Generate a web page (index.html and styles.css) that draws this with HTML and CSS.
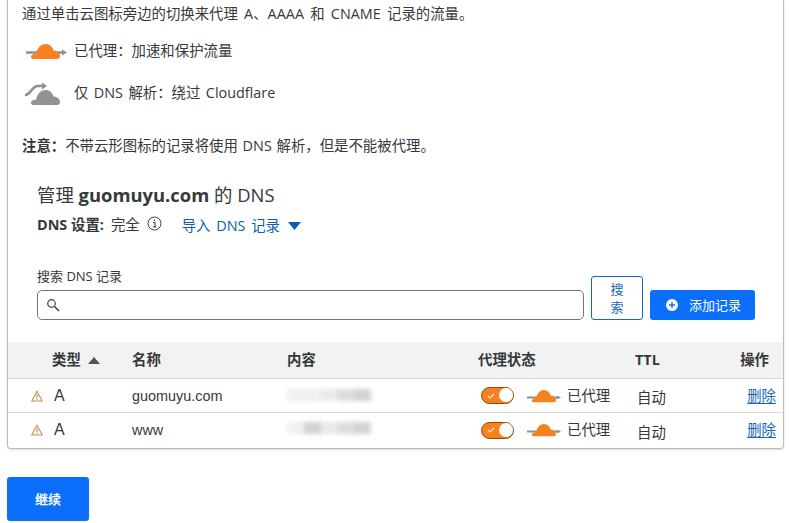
FILE: index.html
```html
<!DOCTYPE html>
<html lang="zh">
<head>
<meta charset="utf-8">
<title>DNS</title>
<link rel="stylesheet" href="styles.css">
</head>
<body>
<svg class="defs" width="0" height="0" aria-hidden="true">
  <symbol id="cloud" viewBox="0 0 30 15">
    <path d="M4 15C1 15 0 12.500 2 11c1-1 3-1.500 4-1C7 4 11 0 15.500 0c4 0 7 2.500 8 6.500 3.500 0 6.500 2.500 6.500 5.500 0 2-1 3-3 3z"/>
  </symbol>
</svg>
<main class="panel">
  <p class="intro">通过单击云图标旁边的切换来代理 A、AAAA 和 CNAME 记录的流量。</p>
  <div class="legend legend-on">
    <svg class="legend-icon" width="42" height="20" viewBox="0 0 42 20"><path d="M1 11.500h12M32 11.500h6" stroke="#8d8f93" stroke-width="2.600" fill="none"/><path d="M37 8.500l5 3-5 3z" fill="#8d8f93"/><use href="#cloud" x="5" y="3" width="30" height="15" fill="#f6821f"/></svg>
    <span>已代理：加速和保护流量</span>
  </div>
  <div class="legend legend-off">
    <svg class="legend-icon" width="38" height="26" viewBox="0 0 38 26"><path d="M1 15c5 0 7-8 12-9h7" stroke="#8d8f93" stroke-width="2.600" fill="none"/><path d="M18 2.500l5 3.500-5 3.500z" fill="#8d8f93"/><use href="#cloud" x="6" y="10" width="30" height="15" fill="#8f9296"/></svg>
    <span>仅 DNS 解析：绕过 Cloudflare</span>
  </div>
  <p class="note"><strong>注意：</strong>不带云形图标的记录将使用 DNS 解析，但是不能被代理。</p>

  <section class="manage">
    <h1>管理 <strong>guomuyu.com</strong> 的 DNS</h1>
    <div class="settings">
      <strong>DNS 设置:</strong>
      <span class="mode">完全</span>
      <svg class="info" width="15" height="15" viewBox="0 0 15 15"><circle cx="7.500" cy="7.500" r="6.500" fill="none" stroke="#444" stroke-width="1"/><path d="M6 6.500h2v4.500M5.800 11h3.600M7.500 3.500v1.500" fill="none" stroke="#444" stroke-width="1.100"/></svg>
      <a class="import" href="#">导入 DNS 记录<svg width="13" height="8" viewBox="0 0 13 8"><path d="M0 0h13L6.500 8z" fill="#0a5fb4"/></svg></a>
    </div>
    <div class="search-row">
      <div class="search-field">
        <label for="q">搜索 DNS 记录</label>
        <div class="input">
          <svg width="14" height="14" viewBox="0 0 14 14"><circle cx="5.500" cy="5.500" r="3.800" fill="none" stroke="#444" stroke-width="1.200"/><path d="M8.500 8.500L13 13" stroke="#444" stroke-width="1.600"/></svg>
          <input id="q" type="text">
        </div>
      </div>
      <button class="btn-search" type="button">搜索</button>
      <button class="btn-add" type="button"><svg width="12" height="12" viewBox="0 0 12 12"><circle cx="6" cy="6" r="6" fill="#fff"/><path d="M3 6h6M6 3v6" stroke="#0b6ffb" stroke-width="1.400"/></svg>添加记录</button>
    </div>
  </section>

  <div class="table">
    <div class="row head">
      <div class="c-type">类型<svg width="12" height="7" viewBox="0 0 12 7"><path d="M0 7h12L6 0z" fill="#555"/></svg></div>
      <div class="c-name">名称</div>
      <div class="c-content">内容</div>
      <div class="c-proxy">代理状态</div>
      <div class="c-ttl">TTL</div>
      <div class="c-act">操作</div>
    </div>
    <div class="row">
      <div class="c-type"><svg class="warn" width="12" height="12" viewBox="0 0 12 12"><path d="M6 1.200L11.200 11H.8z" fill="none" stroke="#c9924f" stroke-width="1.100"/><path d="M6 4.500v3.500M6 8.800v1" stroke="#9a7a55" stroke-width="1"/></svg><span>A</span></div>
      <div class="c-name">guomuyu.com</div>
      <div class="c-content"><div class="blur"><i class="l"></i><i class="l"></i><i class="m"></i><i></i><i class="d"></i></div></div>
      <div class="c-proxy"><span class="toggle"><svg width="8" height="6" viewBox="0 0 8 6"><path d="M1 3l2 2 4-4" fill="none" stroke="#fde3c8" stroke-width="1.200"/></svg></span><svg class="cloud" width="34" height="14" viewBox="0 0 34 14"><path d="M0 8.500h10M27 8.500h3" stroke="#8d8f93" stroke-width="1.800"/><path d="M30 6.500l4 2-4 2z" fill="#8d8f93"/><use href="#cloud" x="4" y="1" width="25" height="12.500" fill="#f6821f"/></svg>已代理</div>
      <div class="c-ttl ttl">自动</div>
      <div class="c-act"><a href="#">删除</a></div>
    </div>
    <div class="row">
      <div class="c-type"><svg class="warn" width="12" height="12" viewBox="0 0 12 12"><path d="M6 1.200L11.200 11H.8z" fill="none" stroke="#c9924f" stroke-width="1.100"/><path d="M6 4.500v3.500M6 8.800v1" stroke="#9a7a55" stroke-width="1"/></svg><span>A</span></div>
      <div class="c-name">www</div>
      <div class="c-content"><div class="blur up"><i class="l"></i><i class="d"></i><i class="m"></i><i></i><i class="d"></i></div></div>
      <div class="c-proxy"><span class="toggle"><svg width="8" height="6" viewBox="0 0 8 6"><path d="M1 3l2 2 4-4" fill="none" stroke="#fde3c8" stroke-width="1.200"/></svg></span><svg class="cloud" width="34" height="14" viewBox="0 0 34 14"><path d="M0 8.500h10M27 8.500h3" stroke="#8d8f93" stroke-width="1.800"/><path d="M30 6.500l4 2-4 2z" fill="#8d8f93"/><use href="#cloud" x="4" y="1" width="25" height="12.500" fill="#f6821f"/></svg>已代理</div>
      <div class="c-ttl ttl">自动</div>
      <div class="c-act"><a href="#">删除</a></div>
    </div>
  </div>
</main>
<button class="btn-continue" type="button">继续</button>
</body>
</html>
```
FILE: styles.css
```css
* { box-sizing: border-box; }
html, body { margin: 0; padding: 0; }
body {
  background: #fff;
  color: #36393a;
  font: 14.4px/18px "Open Sans", "Noto Sans CJK SC", sans-serif;
  padding: 0 5px 0 7px;
  height: 523px;
  overflow: hidden;
}
.defs { position: absolute; }
.panel {
  width: 777px;
  height: 449px;
  border: 1px solid #bcbcbc;
  border-top: 0;
  border-radius: 0 0 4px 4px;
  box-shadow: 0 1px 2px rgba(0,0,0,.15);
  padding-top: 5px;
}
.intro { margin: 0 0 0 14px; word-spacing: 2.5px; }
.legend { display: flex; align-items: center; margin-left: 14px; word-spacing: 1.7px; }
.legend-icon { flex: none; }
.legend-on { margin-top: 17px; height: 22px; padding-left: 3px; }
.legend-on .legend-icon { margin-right: 7px; }
.legend-off { margin-top: 20px; height: 22px; padding-left: 2px; }
.legend-off .legend-icon { margin-right: 12px; }
.note { margin: 33px 0 0 14px; word-spacing: 1px; }
.note strong { font-weight: 700; }
.manage { padding: 0 28px 0 29px; }
h1 {
  font-size: 18.4px;
  line-height: 24px;
  font-weight: 400;
  margin: 28px 0 0;
}
h1 strong { font-weight: 700; }
.settings { display: flex; align-items: center; margin-top: 6px; height: 24px; }
.settings strong { font-weight: 700; margin-right: 7px; }
.info { margin-left: 7px; margin-top: -4px; }
.import { color: #0a5fb4; text-decoration: none; margin-left: 20px; font-size: 14.4px; word-spacing: 2px; display: flex; align-items: center; gap: 8px; margin-top: 2px; }
.search-row { display: flex; align-items: flex-end; margin-top: 31px; }
.search-field { width: 547px; }
.search-field label { display: block; font-size: 13px; line-height: 16px; margin-bottom: 6px; }
.input {
  display: flex;
  align-items: center;
  height: 30px;
  border: 1px solid #757575;
  border-radius: 5px;
  padding-left: 8px;
}
.input input { flex: 1; border: 0; outline: 0; background: none; min-width: 0; }
.btn-search {
  width: 52px;
  height: 44px;
  margin-left: 7px;
  background: #fff;
  border: 1px solid #1769b5;
  border-radius: 3px;
  color: #1769b5;
  font: 13px/18px "Open Sans", "Noto Sans CJK SC", sans-serif;
  padding: 2px 16px;
}
.btn-add {
  width: 105px;
  height: 30px;
  margin-left: 7px;
  padding-left: 8px;
  background: #0b6ffb;
  border: 0;
  border-radius: 3px;
  color: #fff;
  font: 13px/18px "Open Sans", "Noto Sans CJK SC", sans-serif;
  display: flex;
  align-items: center;
  justify-content: center;
  gap: 11px;
}
.table { margin-top: 22px; }
.row {
  display: grid;
  grid-template-columns: 124px 155px 191px 157px 88px 1fr;
  align-items: center;
  height: 34px;
  border-top: 1px solid #d9d9d9;
  font-family: "Liberation Sans", "Noto Sans CJK SC", sans-serif;
  font-size: 14.4px;
}
.row:last-child { height: 35px; }
.row.head {
  height: 36px;
  border-top: 0;
  background: #f2f2f2;
  font-weight: 700;
  font-size: 14.4px;
  font-family: "Open Sans", "Noto Sans CJK SC", sans-serif;
}
.row.head .c-type { padding-left: 44px; gap: 7px; }
.row.head .c-proxy { padding-left: 0; gap: 0; font-size: 14.4px; }
.c-type { display: flex; align-items: center; padding-left: 23px; gap: 11px; }
.c-type span { font-size: 16px; }
.c-proxy { display: flex; align-items: center; padding-left: 3px; font-family: "Open Sans", "Noto Sans CJK SC", sans-serif; font-size: 14.4px; }
.toggle {
  width: 33px;
  height: 17px;
  border-radius: 9px;
  background: #f6821f;
  border: 1.5px solid #8b4a12;
  position: relative;
  display: flex;
  align-items: center;
  padding-left: 5px;
  margin-right: 13px;
}
.toggle::after {
  content: "";
  position: absolute;
  right: 0;
  top: 0;
  width: 14px;
  height: 14px;
  border-radius: 50%;
  background: #fff;
}
.cloud { margin-right: 6px; }
.ttl { font-family: "Open Sans", "Noto Sans CJK SC", sans-serif; font-size: 14.4px; padding: 5px 0 0 2px; }
.c-act { text-align: right; padding-right: 7px; font-family: "Open Sans", "Noto Sans CJK SC", sans-serif; font-size: 14.4px; }
.c-act a { color: #1769b5; text-decoration: underline; text-underline-offset: 2px; }
.row.head .c-act { padding-right: 14px; }
.blur { display: flex; width: 84px; height: 12px; margin-top: -2px; filter: blur(2px); }
.blur.up { margin-top: -5px; }
.blur i { flex: 1; background: #dcdde0; }
.blur i.l { background: #f0f0f2; }
.blur i.m { background: #eceae6; }
.blur i.d { background: #d2d3d6; }
.btn-continue {
  display: block;
  width: 82px;
  height: 44px;
  margin-top: 28px;
  background: #0b6ffb;
  border: 0;
  border-radius: 3px;
  color: #fff;
  font: 700 13px/18px "Open Sans", "Noto Sans CJK SC", sans-serif;
}
```
